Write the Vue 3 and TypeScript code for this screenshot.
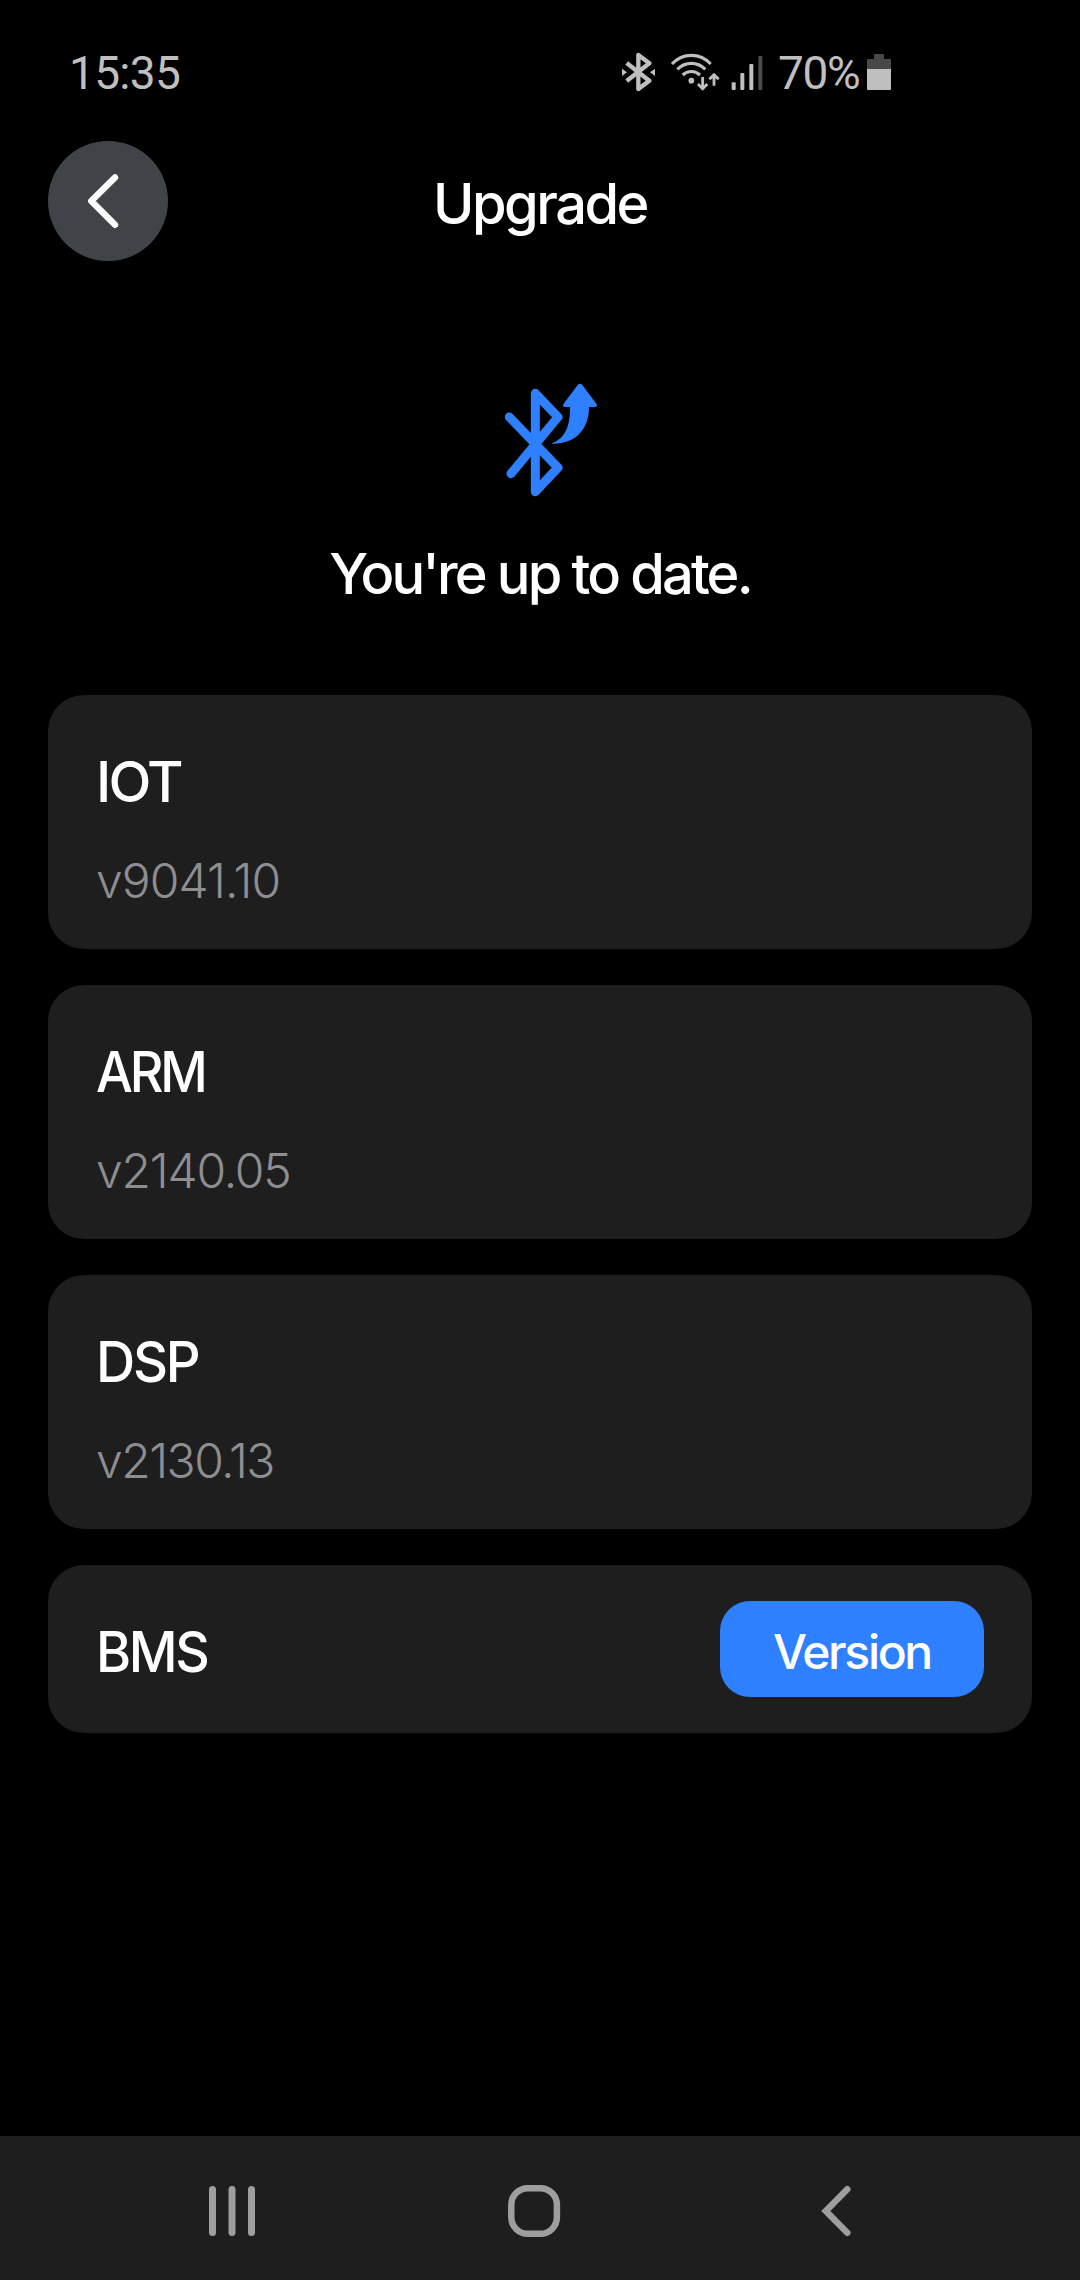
<script setup lang="ts">
interface Module {
  name: string
  version: string
  nameTracking: number
  nameScale: number
  versionTracking: number
}

const modules: Module[] = [
  { name: 'IOT', version: 'v9041.10', nameTracking: -2.7, nameScale: 1, versionTracking: -0.9 },
  { name: 'ARM', version: 'v2140.05', nameTracking: -3.5, nameScale: 0.93, versionTracking: -1.2 },
  { name: 'DSP', version: 'v2130.13', nameTracking: -2.3, nameScale: 0.97, versionTracking: -1.5 },
]
</script>

<template>
  <div class="screen">
    <div class="status">
      <span class="clock">15:35</span>
      <div class="indicators">
        <svg class="radios" width="150" height="42" viewBox="60 30 450 126" fill="none">
          <!-- bluetooth -->
          <g stroke="#bfbfbf" stroke-width="13" stroke-linejoin="round">
            <path d="M80 69 L148 122 L115 147 V45 L148 70 L80 123" />
          </g>
          <path d="M66 86 L81 97 L66 108 Z M165 86 L150 97 L165 108 Z" fill="#bfbfbf" />
          <!-- wi-fi -->
          <g stroke="#bfbfbf" stroke-width="9.5">
            <path d="M216 72 Q240 46 274 46 Q308 46 332 72" />
            <path d="M232 88 Q250 70 274 70 Q298 70 316 88" />
            <path d="M248 105 Q259 94.500 274 94.500 Q289 94.500 300 105" />
            <path d="M308 111 V145 M294 132 L308 146 L322 132" stroke-width="8.500" />
            <path d="M342 137 V104 M328 118 L342 104 L356 118" stroke-width="8.500" />
          </g>
          <circle cx="274" cy="122" r="8.5" fill="#bfbfbf" />
          <!-- cellular -->
          <g fill="#bfbfbf">
            <rect x="395" y="127" width="12" height="23" rx="3" />
            <rect x="421" y="99" width="12" height="51" rx="3" />
            <rect x="448" y="72" width="12" height="78" rx="3" />
            <rect x="475" y="48" width="12" height="102" rx="3" fill="#4b4b4b" />
          </g>
        </svg>
        <span class="percent">70%</span>
        <svg class="battery" width="24" height="36" viewBox="0 0 24 36">
          <path d="M7 1 Q7 0 8 0 H16 Q17 0 17 1 V5 H23 Q24 5 24 6 V15 H0 V6 Q0 5 1 5 H7 Z" fill="#484848" />
          <path d="M0 15 H24 V35 Q24 36 23 36 H1 Q0 36 0 35 Z" fill="#bfbfbf" />
        </svg>
      </div>
    </div>

    <header class="header">
      <button class="back" aria-label="Back">
        <svg width="120" height="120" viewBox="0 0 120 120" fill="none">
          <path d="M67 36.500 L43.300 60 L67 83.700" stroke="#fff" stroke-width="6.500" stroke-linecap="round" stroke-linejoin="round" />
        </svg>
      </button>
      <h1 class="title">Upgrade</h1>
      <span class="spacer"></span>
    </header>

    <section class="hero">
      <svg width="140" height="150" viewBox="0 0 420 450" fill="none">
        <path d="M88 171 L234 323 L166 395 V100 L234 171 L93 341" stroke="#2f80ff" stroke-width="27" stroke-linecap="round" stroke-linejoin="round" />
        <path
          d="M293 75 Q300 68 307 75 L349 131 Q354 140 345 141 H327 C327 205 290 251 219 251 C214 251 215 249 219 248 C258 233 271 193 270 141 H255 Q246 140 251 131 Z"
          fill="#2f80ff"
        />
      </svg>
      <p class="message">You're up to date.</p>
    </section>

    <main class="list">
      <article v-for="m in modules" :key="m.name" class="card">
        <h2 class="name" :style="{ letterSpacing: m.nameTracking + 'px', transform: `scaleX(${m.nameScale})` }">{{ m.name }}</h2>
        <p class="version" :style="{ letterSpacing: m.versionTracking + 'px' }">{{ m.version }}</p>
      </article>
      <article class="card row">
        <h2 class="name bms">BMS</h2>
        <button class="action">Version</button>
      </article>
    </main>

    <nav class="nav">
      <svg width="1080" height="144" viewBox="0 0 1080 144" fill="none">
        <g fill="#9e9e9e">
          <rect x="209" y="50" width="7" height="50" rx="3.500" />
          <rect x="228.500" y="50" width="7" height="50" rx="3.500" />
          <rect x="248" y="50" width="7" height="50" rx="3.500" />
        </g>
        <rect x="511.300" y="52.200" width="45.600" height="45.600" rx="16.5" stroke="#9e9e9e" stroke-width="6.500" />
        <path d="M847.300 53.300 L825.800 75 L847.300 96.700" stroke="#9e9e9e" stroke-width="6.500" stroke-linecap="round" />
      </svg>
    </nav>
  </div>
</template>

<style>
body {
  margin: 0;
  background: #000;
}
</style>

<style scoped>
.screen {
  display: flex;
  flex-direction: column;
  width: 1080px;
  height: 2280px;
  background: #000;
  color: #fff;
  font-family: Inter, 'Liberation Sans', sans-serif;
}
.status {
  display: flex;
  justify-content: space-between;
  box-sizing: border-box;
  height: 141px;
  padding: 46px 189px 0 69px;
  color: #bfbfbf;
  font: 400 46px/54px Roboto, sans-serif;
}
.clock {
  letter-spacing: -0.7px;
}
.indicators {
  display: flex;
  align-items: flex-start;
}
.radios {
  margin: 4px 8px 0 0;
}
.percent {
  letter-spacing: -1.3px;
}
.battery {
  margin: 8px 0 0 7.5px;
}
.header {
  display: flex;
  align-items: flex-start;
  justify-content: space-between;
  height: 120px;
  padding: 0 48px;
}
.back {
  width: 120px;
  height: 120px;
  padding: 0;
  border: 0;
  border-radius: 50%;
  background: #404347;
}
.back svg {
  display: block;
}
.spacer {
  width: 120px;
}
.title,
.message,
.name {
  margin: 0;
  font-size: 56px;
  font-weight: 500;
  line-height: 68px;
}
.title {
  margin-top: 29px;
  letter-spacing: -2.5px;
}
.hero {
  display: flex;
  flex-direction: column;
  align-items: center;
  height: 434px;
  padding-top: 99px;
  box-sizing: border-box;
}
.hero svg {
  display: block;
  margin-left: 20px;
}
.message {
  margin-top: 30px;
  letter-spacing: -2.85px;
  white-space: nowrap;
}
.list {
  display: flex;
  flex-direction: column;
  gap: 36px;
  flex: 1;
  padding: 0 48px;
}
.card {
  box-sizing: border-box;
  height: 254px;
  padding: 53px 48px 39px;
  border-radius: 36px;
  background: #1e1e1e;
}
.name {
  transform-origin: left;
}
.version {
  margin: 35px 0 0;
  color: #8e8e92;
  font-size: 48px;
  font-weight: 300;
  line-height: 59px;
}
.row {
  display: flex;
  align-items: flex-start;
  justify-content: space-between;
  height: 168px;
  padding: 36px 48px;
}
.bms {
  margin-top: 17px;
  letter-spacing: -2.5px;
  transform: scaleX(0.955);
}
.action {
  box-sizing: border-box;
  width: 264px;
  height: 96px;
  padding: 21px 0 16px;
  border: 0;
  border-radius: 30px;
  background: #2f80ff;
  color: #fff;
  font: 500 48px/59px Inter, 'Liberation Sans', sans-serif;
  letter-spacing: -2.3px;
  text-align: center;
}
.nav {
  height: 144px;
  background: #1e1e1e;
}
.nav svg {
  display: block;
}
</style>
